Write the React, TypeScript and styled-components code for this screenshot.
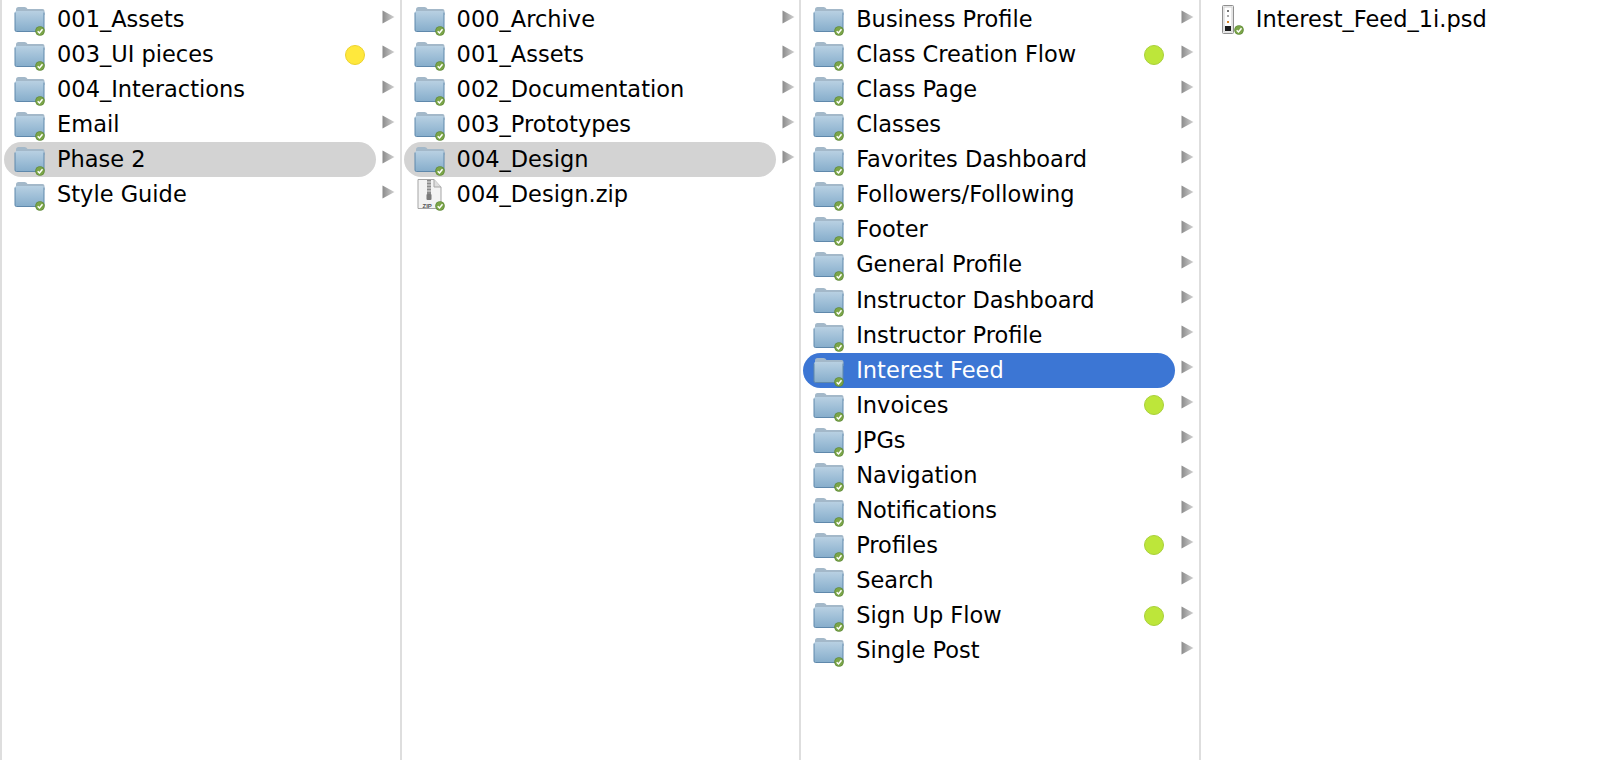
import { useId } from "react";
import styled, { createGlobalStyle } from "styled-components";

const GlobalStyle = createGlobalStyle`
  html, body {
    margin: 0;
    padding: 0;
    background: #fff;
  }
  body {
    font-family: "DejaVu Sans", "Liberation Sans", sans-serif;
    overflow: hidden;
  }
`;

type Item = {
  name: string;
  kind?: "folder" | "zip" | "psd";
  dot?: "yellow" | "green";
  selected?: "grey" | "blue";
  arrow?: boolean;
};

const columns: Item[][] = [
  [
    { name: "001_Assets" },
    { name: "003_UI pieces", dot: "yellow" },
    { name: "004_Interactions" },
    { name: "Email" },
    { name: "Phase 2", selected: "grey" },
    { name: "Style Guide" },
  ],
  [
    { name: "000_Archive" },
    { name: "001_Assets" },
    { name: "002_Documentation" },
    { name: "003_Prototypes" },
    { name: "004_Design", selected: "grey" },
    { name: "004_Design.zip", kind: "zip", arrow: false },
  ],
  [
    { name: "Business Profile" },
    { name: "Class Creation Flow", dot: "green" },
    { name: "Class Page" },
    { name: "Classes" },
    { name: "Favorites Dashboard" },
    { name: "Followers/Following" },
    { name: "Footer" },
    { name: "General Profile" },
    { name: "Instructor Dashboard" },
    { name: "Instructor Profile" },
    { name: "Interest Feed", selected: "blue" },
    { name: "Invoices", dot: "green" },
    { name: "JPGs" },
    { name: "Navigation" },
    { name: "Notifications" },
    { name: "Profiles", dot: "green" },
    { name: "Search" },
    { name: "Sign Up Flow", dot: "green" },
    { name: "Single Post" },
  ],
  [{ name: "Interest_Feed_1i.psd", kind: "psd", arrow: false }],
];

function Badge({ x, y }: { x: number; y: number }) {
  return (
    <g transform={`translate(${x} ${y})`}>
      <circle cx="5" cy="5" r="4.8" fill="#5f8a38" />
      <circle cx="5" cy="5" r="3.9" fill="#7ba548" />
      <path d="M2.7 5.2 L4.5 7 L7.5 3.3" fill="none" stroke="#fff" strokeWidth="1.5" />
    </g>
  );
}

function FolderIcon() {
  const id = useId();
  return (
    <Icon width="34" height="35" viewBox="0 0 34 35">
      <defs>
        <linearGradient id={id} x1="0" y1="0" x2="0" y2="1">
          <stop offset="0" stopColor="#b8d0e2" />
          <stop offset="0.55" stopColor="#9cbdd6" />
          <stop offset="1" stopColor="#86adcb" />
        </linearGradient>
      </defs>
      <path
        d="M2 7.5 Q2 5 4.5 5 L10.5 5 Q12.5 5 13.5 7 L28.5 7 Q30.5 7 30.5 9 L30.5 13 L2 13 Z"
        fill="#a3b8c9"
      />
      <path
        d="M1 10.5 Q1 9 2.5 9 L28.5 9 Q30 9 30 10.5 L30 28 Q30 29.5 28.5 29.5 L2.5 29.5 Q1 29.5 1 28 Z"
        fill={`url(#${id})`}
      />
      <path
        d="M1 10.5 L1 28 Q1 29.5 2.5 29.5 L28.5 29.5 Q30 29.5 30 28 L30 10.5"
        fill="none"
        stroke="#5f88ab"
        strokeWidth="1"
      />
      <Badge x="21" y="24" />
    </Icon>
  );
}

function ZipIcon() {
  return (
    <Icon width="34" height="35" viewBox="0 0 34 35">
      <path d="M4 2.5 L20 2.5 L27 10 L27 31.5 L4 31.5 Z" fill="#f3f3f3" stroke="#a5a5a5" />
      <path d="M20 2.5 L20 10 L27 10" fill="#dedede" stroke="#a5a5a5" />
      <rect x="13" y="3" width="4" height="14" fill="#8a8a8a" />
      <path d="M13 5 H17 M13 8 H17 M13 11 H17 M13 14 H17" stroke="#e2e2e2" strokeWidth="1" />
      <rect x="12.5" y="17" width="5" height="6" rx="1" fill="#7a7a7a" />
      <text x="8.5" y="30.5" fontSize="6" fontFamily="Liberation Sans" fontWeight="700" fill="#555">
        ZIP
      </text>
      <Badge x="21" y="24" />
    </Icon>
  );
}

function PsdIcon() {
  return (
    <Icon width="34" height="35" viewBox="0 0 34 35">
      <rect x="9.5" y="3.5" width="11" height="28" rx="1" fill="#f6f6f6" stroke="#8f8f8f" />
      <rect x="11" y="5" width="8" height="25" fill="#fff" stroke="#cfcfcf" />
      <rect x="14" y="8" width="2" height="2" fill="#777" />
      <rect x="14" y="13" width="2" height="2" fill="#aaa" />
      <rect x="14" y="19" width="2" height="2" fill="#d8872f" />
      <rect x="12" y="24" width="6" height="5" fill="#1c1c1c" />
      <Badge x="21" y="23" />
    </Icon>
  );
}

function Arrow() {
  const id = useId();
  return (
    <ArrowIcon width="13" height="14" viewBox="0 0 13 14">
      <defs>
        <linearGradient id={id} x1="0" y1="0" x2="1" y2="0">
          <stop offset="0" stopColor="#8b8b8b" />
          <stop offset="1" stopColor="#d2d2d2" />
        </linearGradient>
      </defs>
      <path d="M0.5 0.5 L12.5 7 L0.5 13.5 Z" fill={`url(#${id})`} />
    </ArrowIcon>
  );
}

export default function App() {
  return (
    <>
      <GlobalStyle />
      <Browser>
        {columns.map((items, c) => (
          <Column key={c}>
            {items.map((item) => {
              const kind = item.kind ?? "folder";
              return (
                <Row key={item.name}>
                  <Pill $selected={item.selected}>
                    <IconSlot>
                      {kind === "folder" && <FolderIcon />}
                      {kind === "zip" && <ZipIcon />}
                      {kind === "psd" && <PsdIcon />}
                    </IconSlot>
                    <Label $selected={item.selected}>{item.name}</Label>
                    {item.dot && <Dot $color={item.dot} />}
                  </Pill>
                  {item.arrow !== false && <Arrow />}
                </Row>
              );
            })}
          </Column>
        ))}
      </Browser>
    </>
  );
}

const Browser = styled.div`
  display: grid;
  grid-template-columns: repeat(4, 399.6px);
  width: 1600px;
  height: 760px;
`;

const Column = styled.div`
  box-sizing: border-box;
  height: 760px;
  padding: 2px 0 0 2px;
  border-left: 2px solid #dedede;
`;

const Row = styled.div`
  display: flex;
  align-items: center;
  height: 35.07px;
`;

const Pill = styled.div<{ $selected?: "grey" | "blue" }>`
  display: flex;
  align-items: center;
  flex: none;
  width: 372px;
  height: 35px;
  border-radius: 18px;
  background: ${({ $selected }) =>
    $selected === "grey" ? "#d3d3d3" : $selected === "blue" ? "#3c76d4" : "transparent"};
`;

const IconSlot = styled.div`
  display: flex;
  flex: none;
  box-sizing: border-box;
  width: 53px;
  padding-left: 10px;
`;

const Icon = styled.svg`
  display: block;
  flex: none;
`;

const Label = styled.span<{ $selected?: "grey" | "blue" }>`
  flex: 1;
  font-size: 22.5px;
  line-height: 35px;
  white-space: nowrap;
  color: ${({ $selected }) => ($selected === "blue" ? "#fff" : "#000")};
`;

const Dot = styled.span<{ $color: "yellow" | "green" }>`
  flex: none;
  box-sizing: border-box;
  width: 20px;
  height: 20px;
  margin-right: 11px;
  border-radius: 50%;
  background: ${({ $color }) => ($color === "yellow" ? "#ffe83c" : "#bde63a")};
  border: 1px solid ${({ $color }) => ($color === "yellow" ? "#ecd22e" : "#a9d03a")};
`;

const ArrowIcon = styled.svg`
  flex: none;
  margin: 0 0 6px 6px;
`;
